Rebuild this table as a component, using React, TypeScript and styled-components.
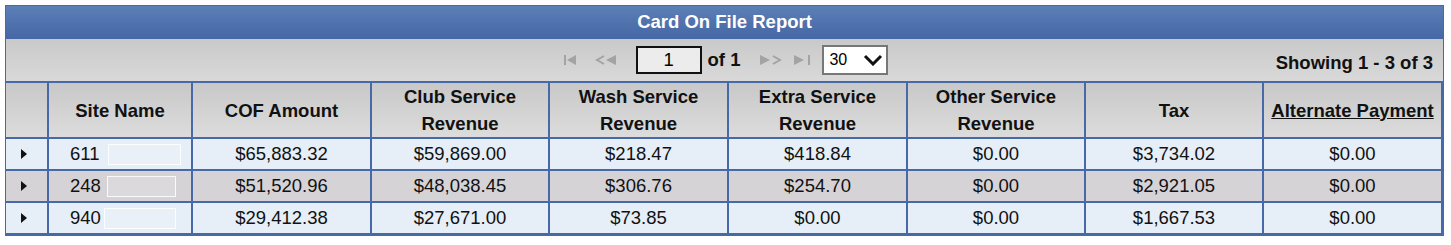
import styled, { createGlobalStyle } from "styled-components";

type Row = {
  site: string;
  maskWidth: number;
  maskGap: number;
  cof: string;
  club: string;
  wash: string;
  extra: string;
  other: string;
  tax: string;
  alt: string;
};

const rows: Row[] = [
  { site: "611", maskWidth: 73, maskGap: 8, cof: "$65,883.32", club: "$59,869.00", wash: "$218.47", extra: "$418.84", other: "$0.00", tax: "$3,734.02", alt: "$0.00" },
  { site: "248", maskWidth: 69, maskGap: 6, cof: "$51,520.96", club: "$48,038.45", wash: "$306.76", extra: "$254.70", other: "$0.00", tax: "$2,921.05", alt: "$0.00" },
  { site: "940", maskWidth: 72, maskGap: 3, cof: "$29,412.38", club: "$27,671.00", wash: "$73.85", extra: "$0.00", other: "$0.00", tax: "$1,667.53", alt: "$0.00" },
];

const COLS = "43px 144px 179px 178px 179px 179px 178px 178px 179px";
const LINE = "#4869a8";
const TEXT = "18.5px";

const GlobalStyle = createGlobalStyle`
  body {
    margin: 0;
    background: #ffffff;
    font-family: "Liberation Sans", Arial, sans-serif;
  }
`;

function App() {
  return (
    <>
      <GlobalStyle />
      <Page>
        <Panel>
          <TitleBar>Card On File Report</TitleBar>
          <Toolbar>
            <span />
            <Pager>
              <NavIcon width="12" height="10" viewBox="0 0 12 10" $gap={13}>
                <rect x="0" y="0" width="2" height="10" />
                <polygon points="12,0 12,10 3,5" />
              </NavIcon>
              <NavIcon width="27" height="10" viewBox="0 0 27 10" $gap={20}>
                <polyline points="15,1 8,5 15,9" fill="none" strokeWidth="2" />
                <polygon points="27,0 27,10 17,5" />
              </NavIcon>
              <PageInput>1</PageInput>
              <OfText>of 1</OfText>
              <NavIcon width="22" height="10" viewBox="0 0 22 10" $gap={12}>
                <polygon points="0,0 0,10 10,5" />
                <polyline points="13,1 20,5 13,9" fill="none" strokeWidth="2" />
              </NavIcon>
              <NavIcon width="18" height="10" viewBox="0 0 18 10" $gap={10}>
                <polygon points="0,0 0,10 10,5" />
                <rect x="14" y="0" width="2" height="10" />
              </NavIcon>
              <SizeSelect>
                <span>30</span>
                <svg width="20" height="12" viewBox="0 0 20 12">
                  <polyline points="2,2 10,10 18,2" fill="none" stroke="#111" strokeWidth="3" />
                </svg>
              </SizeSelect>
            </Pager>
            <Showing>Showing 1 - 3 of 3</Showing>
          </Toolbar>
          <Grid>
            <HeadCell />
            <HeadCell>Site Name</HeadCell>
            <HeadCell>COF Amount</HeadCell>
            <HeadCell>Club Service<br />Revenue</HeadCell>
            <HeadCell>Wash Service<br />Revenue</HeadCell>
            <HeadCell>Extra Service<br />Revenue</HeadCell>
            <HeadCell>Other Service<br />Revenue</HeadCell>
            <HeadCell>Tax</HeadCell>
            <HeadCell><u>Alternate Payment</u></HeadCell>
            {rows.map((r, i) => {
              const alt = i % 2 === 1;
              return (
                <RowGroup key={r.site}>
                  <Cell $alt={alt}>
                    <Expander />
                  </Cell>
                  <Cell $alt={alt} $left>
                    {r.site}
                    <Mask style={{ width: r.maskWidth, marginLeft: r.maskGap }} />
                  </Cell>
                  <Cell $alt={alt}>{r.cof}</Cell>
                  <Cell $alt={alt}>{r.club}</Cell>
                  <Cell $alt={alt}>{r.wash}</Cell>
                  <Cell $alt={alt}>{r.extra}</Cell>
                  <Cell $alt={alt}>{r.other}</Cell>
                  <Cell $alt={alt}>{r.tax}</Cell>
                  <Cell $alt={alt}>{r.alt}</Cell>
                </RowGroup>
              );
            })}
          </Grid>
        </Panel>
      </Page>
    </>
  );
}

export default App;

const Page = styled.div`
  padding: 5px 0 0 5px;
`;

const Panel = styled.div`
  width: 1439px;
  box-sizing: border-box;
  border: 1px solid ${LINE};
`;

const TitleBar = styled.div`
  height: 33px;
  display: flex;
  align-items: center;
  justify-content: center;
  padding-bottom: 1px;
  box-sizing: border-box;
  background: linear-gradient(to bottom, #5b7fb7, #4567a5);
  color: #ffffff;
  font-size: ${TEXT};
  font-weight: bold;
`;

const Toolbar = styled.div`
  height: 44px;
  box-sizing: border-box;
  border-bottom: 2px solid ${LINE};
  background: linear-gradient(to bottom, #c9c9c9, #d9d9d9);
  display: grid;
  grid-template-columns: 1fr auto 1fr;
  align-items: center;
`;

const Pager = styled.div`
  display: flex;
  align-items: center;
  margin-left: 3px;
`;

const NavIcon = styled.svg<{ $gap: number }>`
  fill: #a3a3a3;
  stroke: #a3a3a3;
  margin-right: ${(p) => p.$gap}px;
  & rect,
  & polygon {
    stroke: none;
  }
`;

const PageInput = styled.div`
  width: 66px;
  height: 28px;
  box-sizing: border-box;
  border: 2px solid #111111;
  background: #ececec;
  display: flex;
  align-items: center;
  justify-content: center;
  font-size: ${TEXT};
  color: #000;
`;

const OfText = styled.span`
  margin: 0 20px 0 6px;
  font-size: ${TEXT};
  font-weight: bold;
  color: #111;
`;

const SizeSelect = styled.div`
  width: 66px;
  height: 30px;
  box-sizing: border-box;
  border: 2px solid #777777;
  background: #ffffff;
  display: flex;
  align-items: center;
  justify-content: space-between;
  padding: 0 3px 0 5px;
  font-size: 16px;
  color: #000;
`;

const Showing = styled.div`
  justify-self: end;
  align-self: end;
  margin: 0 10px 7px 0;
  font-size: ${TEXT};
  font-weight: bold;
  color: #111;
`;

const Grid = styled.div`
  display: grid;
  grid-template-columns: ${COLS};
`;

const RowGroup = styled.div`
  display: contents;
`;

const HeadCell = styled.div`
  height: 56px;
  box-sizing: border-box;
  border-right: 2px solid ${LINE};
  border-bottom: 2px solid ${LINE};
  background: linear-gradient(to bottom, #c8c8c8, #dcdcdc);
  display: flex;
  align-items: center;
  justify-content: center;
  text-align: center;
  font-size: ${TEXT};
  font-weight: bold;
  line-height: 27px;
  color: #111;
`;

const Cell = styled.div<{ $alt?: boolean; $left?: boolean }>`
  height: 32px;
  box-sizing: border-box;
  border-right: 2px solid ${LINE};
  border-bottom: 2px solid ${LINE};
  background: ${(p) => (p.$alt ? "#d6d3d7" : "#e6eef7")};
  display: flex;
  align-items: center;
  justify-content: ${(p) => (p.$left ? "flex-start" : "center")};
  padding-left: ${(p) => (p.$left ? "21px" : "0")};
  font-size: ${TEXT};
  color: #111;
`;

const Expander = styled.span`
  width: 0;
  height: 0;
  margin-right: 5px;
  border-top: 5px solid transparent;
  border-bottom: 5px solid transparent;
  border-left: 6px solid #111;
`;

const Mask = styled.span`
  display: inline-block;
  height: 21px;
  box-sizing: border-box;
  border: 1px solid rgba(255, 255, 255, 0.85);
  background: rgba(255, 255, 255, 0.15);
`;
